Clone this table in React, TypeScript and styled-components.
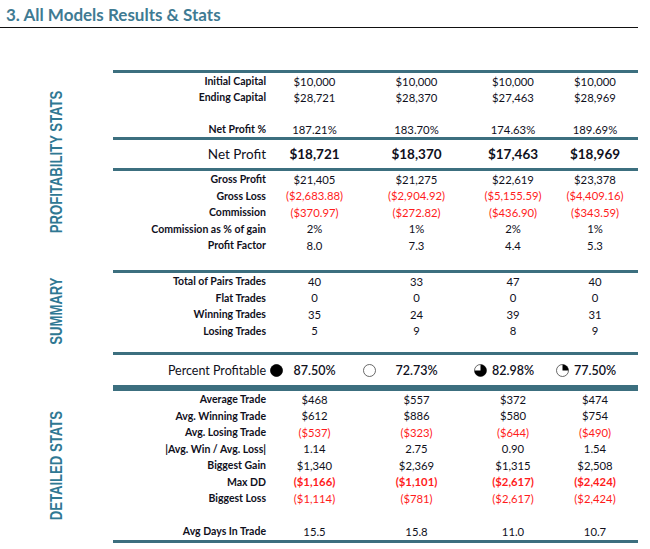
import React from "react";
import styled, { createGlobalStyle } from "styled-components";

const GlobalStyle = createGlobalStyle`
  body {
    margin: 0;
    background: #ffffff;
  }
`;

type Line = {
  label: string;
  values?: string[];
  bold?: boolean;
};

type Pie = "full" | "empty" | "three" | "quarter";

const topRows: Line[] = [
  { label: "Initial Capital", values: ["$10,000", "$10,000", "$10,000", "$10,000"] },
  { label: "Ending Capital", values: ["$28,721", "$28,370", "$27,463", "$28,969"] },
  { label: "" },
  { label: "Net Profit %", values: ["187.21%", "183.70%", "174.63%", "189.69%"] },
];

const netProfit = ["$18,721", "$18,370", "$17,463", "$18,969"];

const grossRows: Line[] = [
  { label: "Gross Profit", values: ["$21,405", "$21,275", "$22,619", "$23,378"] },
  { label: "Gross Loss", values: ["($2,683.88)", "($2,904.92)", "($5,155.59)", "($4,409.16)"] },
  { label: "Commission", values: ["($370.97)", "($272.82)", "($436.90)", "($343.59)"] },
  { label: "Commission as % of gain", values: ["2%", "1%", "2%", "1%"] },
  { label: "Profit Factor", values: ["8.0", "7.3", "4.4", "5.3"] },
  { label: "" },
];

const summaryRows: Line[] = [
  { label: "Total of Pairs Trades", values: ["40", "33", "47", "40"] },
  { label: "Flat Trades", values: ["0", "0", "0", "0"] },
  { label: "Winning Trades", values: ["35", "24", "39", "31"] },
  { label: "Losing Trades", values: ["5", "9", "8", "9"] },
];

const percent: { value: string; pie: Pie }[] = [
  { value: "87.50%", pie: "full" },
  { value: "72.73%", pie: "empty" },
  { value: "82.98%", pie: "three" },
  { value: "77.50%", pie: "quarter" },
];

const detailRows: Line[] = [
  { label: "Average Trade", values: ["$468", "$557", "$372", "$474"] },
  { label: "Avg. Winning Trade", values: ["$612", "$886", "$580", "$754"] },
  { label: "Avg. Losing Trade", values: ["($537)", "($323)", "($644)", "($490)"] },
  { label: "|Avg. Win / Avg. Loss|", values: ["1.14", "2.75", "0.90", "1.54"] },
  { label: "Biggest Gain", values: ["$1,340", "$2,369", "$1,315", "$2,508"] },
  { label: "Max DD", values: ["($1,166)", "($1,101)", "($2,617)", "($2,424)"], bold: true },
  { label: "Biggest Loss", values: ["($1,114)", "($781)", "($2,617)", "($2,424)"] },
  { label: "" },
  { label: "Avg Days In Trade", values: ["15.5", "15.8", "11.0", "10.7"] },
];

const PieIcon = ({ kind }: { kind: Pie }) => (
  <svg width="13" height="13" viewBox="0 0 13 13">
    <circle
      cx="6.5"
      cy="6.5"
      r="6"
      fill={kind === "full" ? "#000" : "#fff"}
      stroke={kind === "full" ? "#000" : "#444"}
      strokeWidth="0.8"
    />
    {kind === "three" && <path d="M6.5 6.5 V0.5 A6 6 0 1 1 0.5 6.5 Z" fill="#000" />}
    {kind === "quarter" && <path d="M6.5 6.5 V0.5 A6 6 0 0 1 12.5 6.5 Z" fill="#000" />}
  </svg>
);

const StatRows = ({ rows, height }: { rows: Line[]; height: number }) => (
  <>
    {rows.map((row, i) => (
      <Row key={i} $height={height}>
        <Label>{row.label}</Label>
        {row.values?.map((v, j) => (
          <Value key={j} $neg={v.startsWith("(")} $bold={row.bold}>
            {v}
          </Value>
        ))}
      </Row>
    ))}
  </>
);

export default function App() {
  return (
    <Page>
      <GlobalStyle />
      <Title>3. All Models Results &amp; Stats</Title>
      <Sheet>
        <Side $shift={16}>
          <SideText>PROFITABILITY STATS</SideText>
        </Side>
        <Block>
          <StatRows rows={topRows} height={16} />
          <BigRow>
            <BigLabel>Net Profit</BigLabel>
            {netProfit.map((v) => (
              <BigValue key={v}>{v}</BigValue>
            ))}
          </BigRow>
          <StatRows rows={grossRows} height={16.5} />
        </Block>

        <Side $shift={0}>
          <SideText>SUMMARY</SideText>
        </Side>
        <Block>
          <StatRows rows={summaryRows} height={16.5} />
          <Spacer />
        </Block>

        <Side $shift={0} />
        <Block>
          <PercentRow>
            <PercentLabel>Percent Profitable</PercentLabel>
            {percent.map((p) => (
              <PercentCell key={p.value}>
                <PieIcon kind={p.pie} />
                <span>{p.value}</span>
              </PercentCell>
            ))}
          </PercentRow>
        </Block>

        <Side $shift={0}>
          <SideText>DETAILED STATS</SideText>
        </Side>
        <Block $closed>
          <StatRows rows={detailRows} height={16.5} />
        </Block>
      </Sheet>
    </Page>
  );
}

const teal = "#3c6f7f";
const columns = "155px 93px 111px 82px 82px";

const Page = styled.div`
  width: 638px;
  font-family: Lato, "Open Sans", sans-serif;
  color: #10101c;
`;

const Title = styled.h1`
  margin: 0;
  padding: 5px 0 1px 6px;
  height: 21px;
  line-height: 20px;
  font-size: 17px;
  font-weight: 700;
  color: #3f7b93;
  border-bottom: 1px solid #111;
`;

const Sheet = styled.div`
  display: grid;
  grid-template-columns: 113px 525px;
  margin-top: 42px;
`;

const Side = styled.div<{ $shift: number }>`
  display: flex;
  align-items: center;
  justify-content: center;
  padding-bottom: ${(p) => p.$shift}px;
`;

const SideText = styled.div`
  writing-mode: vertical-rl;
  transform: rotate(180deg) scaleY(0.82);
  font-family: "Liberation Sans", Arial, sans-serif;
  font-weight: 700;
  font-size: 16px;
  color: #2f7893;
  white-space: nowrap;
`;

const Block = styled.div<{ $closed?: boolean }>`
  border-top: 3px solid ${teal};
  border-bottom: ${(p) => (p.$closed ? `3px solid ${teal}` : "none")};
`;

const Row = styled.div<{ $height: number }>`
  display: grid;
  grid-template-columns: ${columns};
  align-items: center;
  height: ${(p) => p.$height}px;
`;

const Label = styled.div`
  text-align: right;
  padding-right: 2px;
  font-size: 10.5px;
  font-weight: 700;
  white-space: nowrap;
`;

const Value = styled.div<{ $neg?: boolean; $bold?: boolean }>`
  text-align: center;
  font-size: 11.3px;
  font-weight: ${(p) => (p.$bold ? 700 : 400)};
  color: ${(p) => (p.$neg ? "#ff1c1c" : "#10101c")};
  white-space: nowrap;
`;

const BigRow = styled.div`
  display: grid;
  grid-template-columns: ${columns};
  align-items: center;
  height: 28px;
  border-top: 3px solid ${teal};
  border-bottom: 3px solid ${teal};
`;

const BigLabel = styled.div`
  text-align: right;
  padding-right: 2px;
  font-size: 13.5px;
`;

const BigValue = styled.div`
  text-align: center;
  font-size: 13.5px;
  font-weight: 700;
`;

const Spacer = styled.div`
  height: 12px;
`;

const PercentRow = styled.div`
  display: grid;
  grid-template-columns: ${columns};
  align-items: center;
  height: 30px;
  border-bottom: 3px solid ${teal};
`;

const PercentLabel = styled.div`
  text-align: right;
  padding-right: 2px;
  font-size: 12.5px;
`;

const PercentCell = styled.div`
  display: grid;
  grid-template-columns: 16px 1fr 16px;
  align-items: center;
  font-size: 12.5px;
  font-weight: 600;

  svg {
    display: block;
    margin-left: 2px;
  }

  span {
    text-align: center;
  }
`;
